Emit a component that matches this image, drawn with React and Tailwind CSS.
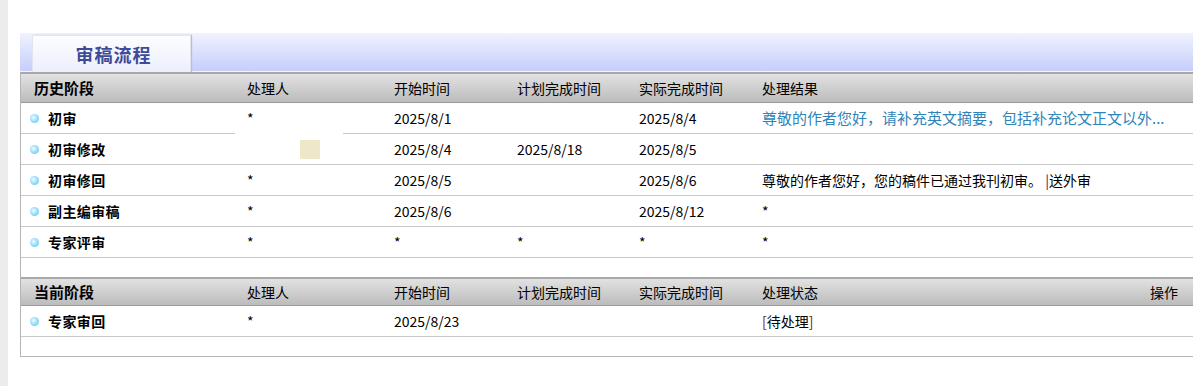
import React from "react";

const FONT = { fontFamily: '"Noto Sans CJK SC", "Noto Sans", sans-serif' };

const W = ["w-[214px]", "w-[147px]", "w-[123px]", "w-[122px]", "w-[123px]"];

function Bullet() {
  return (
    <span className="inline-block w-[9px] h-[9px] rounded-full mr-[9px] bg-[radial-gradient(circle_at_40%_40%,#f4fcff_0%,#9ee0fb_45%,#4fc0ee_100%)]" />
  );
}

function Header({ first, last, h }) {
  const cols = [first, "处理人", "开始时间", "计划完成时间", "实际完成时间"];
  return (
    <div className={`flex ${h} border-t-2 border-t-[#a8a8a8] border-b border-b-[#9a9a9a] bg-gradient-to-b from-[#e2e2e2] to-[#bcbcbc] text-[14px] text-black`}>
      {cols.map((c, i) => (
        <div key={i} className={`${W[i]} shrink-0 flex items-center ${i === 0 ? "pl-[13px] font-bold text-[15px]" : "pl-[12px]"}`}>
          {c}
        </div>
      ))}
      <div className="flex-1 flex items-center justify-between pl-[12px] pr-[15px]">
        <span>{last}</span>
        {last === "处理状态" && <span>操作</span>}
      </div>
    </div>
  );
}

function Row({ name, cells, result, special }) {
  return (
    <div className="flex h-[31px] text-[14px] text-black">
      <div className={`${W[0]} shrink-0 flex items-center pl-[9px] font-bold tracking-[0.4px] border-b border-[#c8c8c8]`}>
        <Bullet />
        {name}
      </div>
      {special ? (
        <div className={`${W[1]} shrink-0 flex flex-col`}>
          <div className="flex-1 flex items-center pl-[12px]">{cells[0]}</div>
          <div className="h-px ml-[108px] bg-[#c8c8c8]" />
        </div>
      ) : (
        <div className={`${W[1]} shrink-0 flex items-center pl-[12px] border-b border-[#c8c8c8]`}>
          {cells[0] === "box" ? <span className="ml-[53px] w-[20px] h-[19px] bg-[#efe7c9]" /> : cells[0]}
        </div>
      )}
      {cells.slice(1).map((c, i) => (
        <div key={i} className={`${W[i + 2]} shrink-0 flex items-center pl-[12px] border-b border-[#c8c8c8]`}>
          {c}
        </div>
      ))}
      <div className="flex-1 flex items-center pl-[12px] border-b border-[#c8c8c8] whitespace-nowrap overflow-hidden">
        {result}
      </div>
    </div>
  );
}

export default function App() {
  return (
    <div style={FONT} className="relative w-[1193px] h-[386px] bg-white overflow-hidden flex">
      <div className="w-[8px] h-full bg-[#ececec] shrink-0" />
      <div className="flex-1 pl-[12px] pt-[33px]">
        <div className="h-[39px] bg-gradient-to-b from-[#f0f2fe] to-[#c6cefb] pl-[12px] pt-[2px] border-b border-[#f4f4f4]">
          <div className="w-[159px] h-[37px] pl-[4px] bg-gradient-to-b from-[#fdfdff] to-[#eceffc] border-x border-t border-[#e2e4f0] shadow-[1px_0_1px_#b8bcd8] flex items-center justify-center text-[18px] font-bold text-[#3d4b98] tracking-[1px]">
            审稿流程
          </div>
        </div>
        <div className="border-l border-b border-[#b4b4b4]">
          <Header first="历史阶段" last="处理结果" h="h-[31px]" />
          <Row name="初审" special cells={["*", "2025/8/1", "", "2025/8/4"]}
            result={<span className="text-[#2f84b8] text-[15px]">尊敬的作者您好，请补充英文摘要，包括补充论文正文以外...</span>} />
          <Row name="初审修改" cells={["box", "2025/8/4", "2025/8/18", "2025/8/5"]} result="" />
          <Row name="初审修回" cells={["*", "2025/8/5", "", "2025/8/6"]}
            result={<span>尊敬的作者您好，您的稿件已通过我刊初审。 <span className="text-[#1a2a6a]">|</span>送外审</span>} />
          <Row name="副主编审稿" cells={["*", "2025/8/6", "", "2025/8/12"]} result="*" />
          <Row name="专家评审" cells={["*", "*", "*", "*"]} result="*" />
          <div className="h-[19px]" />
          <Header first="当前阶段" last="处理状态" h="h-[29px]" />
          <Row name="专家审回" cells={["*", "2025/8/23", "", ""]}
            result={<span><span className="text-[#7a1a00]">[</span>待处理<span className="text-[#7a1a00]">]</span></span>} />
          <div className="h-[19px]" />
        </div>
      </div>
    </div>
  );
}
